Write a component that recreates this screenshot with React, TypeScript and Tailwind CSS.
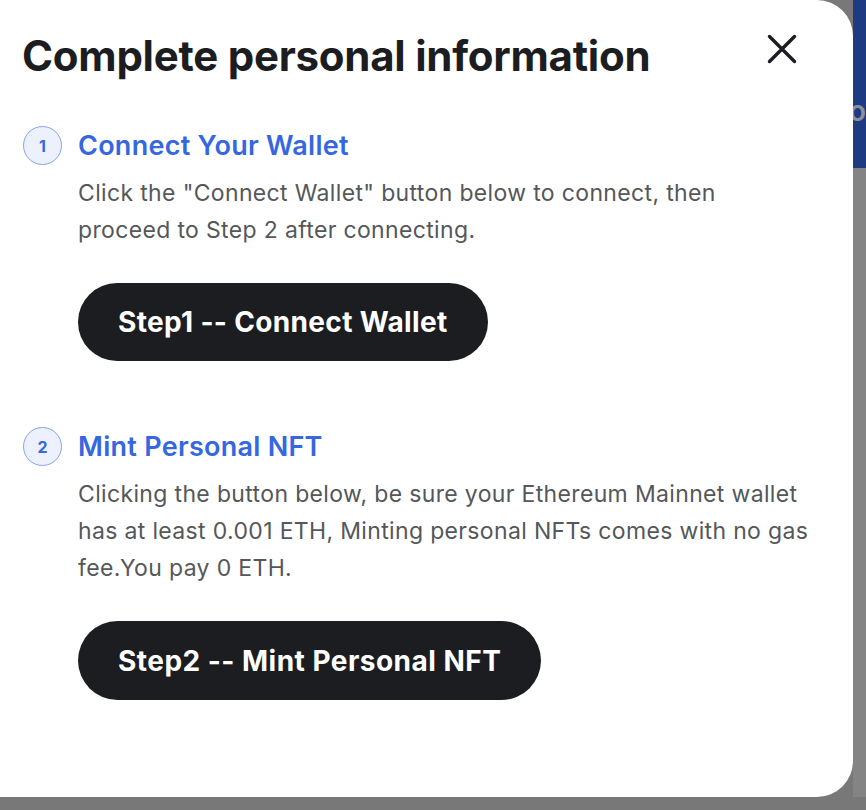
function StepHeader({ n, title }: { n: number; title: string }) {
  return (
    <div className="flex items-center gap-[16px]">
      <div className="flex h-[39px] w-[39px] items-center justify-center rounded-full border border-[#86a3f0] bg-[#edf1fd] text-[16px] font-bold text-[#3467e0]">
        {n}
      </div>
      <h3 className="text-[27px] font-semibold leading-[32px] tracking-[0.01em] text-[#3467e0]">{title}</h3>
    </div>
  );
}

export default function App() {
  return (
    <div
      className="flex h-[810px] w-[866px] flex-col overflow-hidden bg-[#787878]"
      style={{ fontFamily: "Inter, 'Noto Sans', sans-serif" }}
    >
      <div className="flex">
        <div className="h-[797px] w-[853px] shrink-0 rounded-r-[36px] bg-white pl-[22px] pr-[22px] pt-[28px]">
          <div className="flex items-start justify-between">
            <h2 className="text-[42px] font-bold leading-[56px] tracking-[-0.006em] text-[#1b1d20]">
              Complete personal information
            </h2>
            <button className="mr-[34px] mt-[6px] text-[#1b1d20]">
              <svg width="30" height="30" viewBox="0 0 30 30" fill="none" stroke="currentColor" strokeWidth="3.4" strokeLinecap="round">
                <path d="M2.5 2.5 27.5 27.5M27.5 2.5 2.5 27.5" />
              </svg>
            </button>
          </div>

          <div className="mt-[42px] pl-[1px]">
            <StepHeader n={1} title="Connect Your Wallet" />
            <p className="mt-[10px] pl-[55px] text-[23px] leading-[37px] tracking-[0.015em] text-[#555759]">
              Click the "Connect Wallet" button below to connect, then
              <br />
              proceed to Step 2 after connecting.
            </p>
            <div className="mt-[34px] pl-[55px]">
              <button className="h-[78px] rounded-full bg-[#1b1d20] px-[40px] text-[28px] font-bold tracking-[0.012em] text-white">
                Step1 -- Connect Wallet
              </button>
            </div>
          </div>

          <div className="mt-[66px] pl-[1px]">
            <StepHeader n={2} title="Mint Personal NFT" />
            <p className="mt-[10px] pl-[55px] pr-[20px] text-[23px] leading-[37px] tracking-[0.015em] text-[#555759]">
              Clicking the button below, be sure your Ethereum Mainnet wallet
              <br />
              has at least 0.001 ETH, Minting personal NFTs comes with no gas
              <br />
              fee.You pay 0 ETH.
            </p>
            <div className="mt-[34px] pl-[55px]">
              <button className="h-[79px] rounded-full bg-[#1b1d20] px-[40px] text-[28px] font-bold tracking-[0.017em] text-white">
                Step2 -- Mint Personal NFT
              </button>
            </div>
          </div>
        </div>
        <div className="flex flex-1 flex-col">
          <div className="h-[168px] overflow-hidden bg-[#1e3a80] pt-[95px] text-[28px] font-semibold leading-[32px] text-[#8a8f9a]">
            <span className="-ml-[4px]">o</span>
          </div>
          <div className="flex-1 bg-[#848484]" />
        </div>
      </div>
      <div className="flex-1 bg-[#787878]" />
    </div>
  );
}
